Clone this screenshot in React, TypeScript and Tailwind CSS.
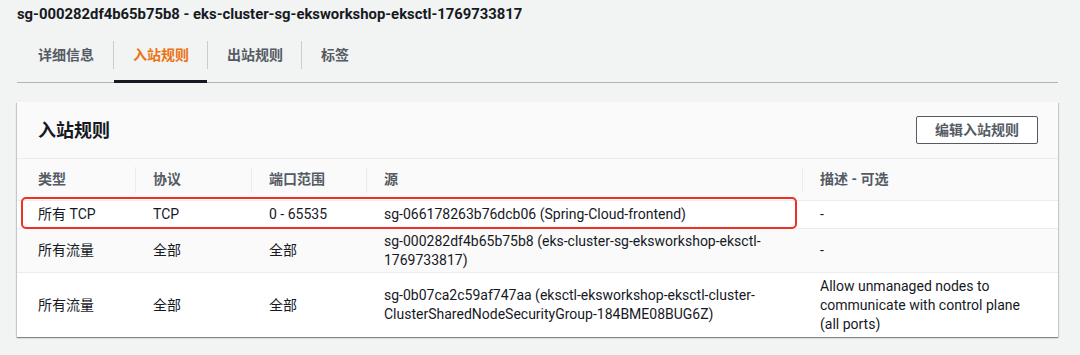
import React from "react";

const font = "font-['Roboto','Noto_Sans_CJK_SC',sans-serif]";

const tabs = [
  { label: "详细信息", active: false },
  { label: "入站规则", active: true },
  { label: "出站规则", active: false },
  { label: "标签", active: false },
];

const headers = ["类型", "协议", "端口范围", "源", "描述 - 可选"];

type Row = {
  type: string;
  proto: string;
  port: string;
  source: React.ReactNode;
  desc: React.ReactNode;
  h: string;
  bg: string;
};

const rows: Row[] = [
  {
    type: "所有 TCP",
    proto: "TCP",
    port: "0 - 65535",
    source: "sg-066178263b76dcb06 (Spring-Cloud-frontend)",
    desc: "-",
    h: "h-[28px]",
    bg: "bg-white",
  },
  {
    type: "所有流量",
    proto: "全部",
    port: "全部",
    source: (
      <>
        sg-000282df4b65b75b8 (eks-cluster-sg-eksworkshop-eksctl-
        <wbr />
        1769733817)
      </>
    ),
    desc: "-",
    h: "h-[44px]",
    bg: "bg-[#fafafa]",
  },
  {
    type: "所有流量",
    proto: "全部",
    port: "全部",
    source: (
      <>
        sg-0b07ca2c59af747aa (eksctl-eksworkshop-eksctl-cluster-
        <wbr />
        ClusterSharedNodeSecurityGroup-184BME08BUG6Z)
      </>
    ),
    desc: "Allow unmanaged nodes to communicate with control plane (all ports)",
    h: "h-[64px]",
    bg: "bg-white",
  },
];

export default function App() {
  return (
    <div
      className={`${font} w-[1080px] h-[355px] bg-[#f2f3f3] pl-[17px] pr-[22px] text-[#16191f] overflow-hidden`}
    >
      {/* Title */}
      <div className="h-[28px] flex items-center text-[14.85px] font-bold text-[#16191f]">
        sg-000282df4b65b75b8 - eks-cluster-sg-eksworkshop-eksctl-1769733817
      </div>

      {/* Tabs */}
      <div className="flex h-[55px] border-b border-[#aab7b8]">
        {tabs.map((t, i) => (
          <div key={t.label} className="relative flex items-center">
            {i > 0 && <div className="w-px h-[28px] bg-[#c6cfd0]" />}
            <div
              className={`relative h-full flex items-center ${
                i === 0 ? "pl-[21px] pr-[19px]" : "pl-[19px] pr-[18px]"
              } text-[14px] font-bold ${t.active ? "text-[#ec7211]" : "text-[#545b64]"}`}
            >
              {t.label}
              {t.active && (
                <div className="absolute left-0 right-0 -bottom-px h-[3px] bg-[#16191f]" />
              )}
            </div>
          </div>
        ))}
      </div>

      {/* Card */}
      <div className="relative mt-[19px] bg-white shadow-[0_1px_1px_0_rgba(0,28,36,0.3),1px_1px_1px_0_rgba(0,28,36,0.15),-1px_1px_1px_0_rgba(0,28,36,0.15)]">
        <div className="h-[57px] flex items-center justify-between pl-[21px] pr-[20px] bg-[#fafafa] border-b border-[#eaeded]">
          <div className="text-[18px] font-bold text-[#16191f]">入站规则</div>
          <button className="h-[28px] w-[122px] flex items-center justify-center border border-[#545b64] rounded-[2px] bg-white text-[14px] font-bold text-[#545b64]">
            编辑入站规则
          </button>
        </div>

        <div className="grid grid-cols-[118px_116px_115px_436px_1fr] text-[14px]">
          {headers.map((h, i) => (
            <div
              key={h}
              className={`h-[42px] flex items-center bg-[#fafafa] border-b border-[#eaeded] font-bold text-[#545b64] ${
                i === 0 ? "pl-[21px]" : ""
              }`}
            >
              {i === 0 ? (
                h
              ) : (
                <div className="h-[26px] flex items-center border-l border-[#eaeded] pl-[17px]">
                  {h}
                </div>
              )}
            </div>
          ))}

          {rows.map((r, ri) =>
            [r.type, r.proto, r.port, r.source, r.desc].map((c, ci) => (
              <div
                key={`${ri}-${ci}`}
                className={`${r.h} ${r.bg} flex items-center leading-[19px] ${
                  ri < rows.length - 1 ? "border-b border-[#eaeded]" : ""
                } ${ci === 0 ? "pl-[21px]" : "pl-[18px]"} ${ci === 4 ? "pr-[20px]" : "pr-[12px]"}`}
              >
                <div>{c}</div>
              </div>
            ))
          )}
        </div>

        {/* annotation highlight */}
        <div className="absolute left-[4px] top-[95px] w-[776px] h-[32px] border-2 border-[#ee3124] rounded-[5px] pointer-events-none" />
      </div>
    </div>
  );
}
